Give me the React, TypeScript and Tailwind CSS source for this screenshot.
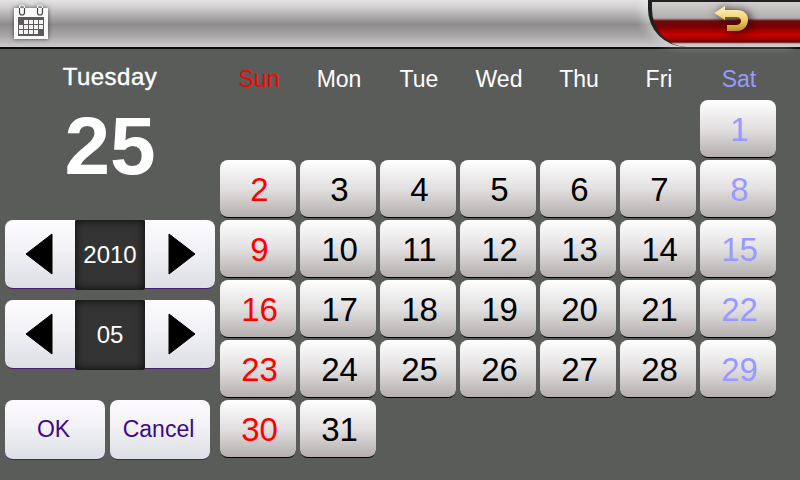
const font = "font-['Liberation_Sans',Arial,sans-serif]";

const weekDays = [
  { label: "Sun", color: "text-[#ff0000]" },
  { label: "Mon", color: "text-white" },
  { label: "Tue", color: "text-white" },
  { label: "Wed", color: "text-white" },
  { label: "Thu", color: "text-white" },
  { label: "Fri", color: "text-white" },
  { label: "Sat", color: "text-[#9999ff]" },
];

function CalendarIcon() {
  return (
    <svg width="36" height="36" viewBox="0 0 36 36" className="drop-shadow-[0_0_2px_rgba(0,0,0,0.6)]">
      <rect x="1" y="4" width="34" height="31" fill="#fafafa" />
      <rect x="5" y="13" width="26" height="19" fill="#5c5a5a" />
      {[0, 1, 2, 3, 4].map((c) =>
        [0, 1, 2].map((r) =>
          r === 0 && c < 1 ? null : r === 2 && c > 3 ? null : (
            <rect key={`${c}-${r}`} x={6 + c * 5} y={16 + r * 5} width="4" height="4" fill="#f4f4f4" />
          ),
        ),
      )}
      <path d="M6.5 4v4.5a2.5 2.5 0 0 0 5 0V4M24.5 4v4.5a2.5 2.5 0 0 0 5 0V4" fill="none" stroke="#444" strokeWidth="1.2" />
      <path d="M6.5 4V3a2.5 2 0 0 1 5 0v1M24.5 4V3a2.5 2 0 0 1 5 0v1" fill="none" stroke="#f2f2f2" strokeWidth="1.2" />
    </svg>
  );
}

function BackIcon() {
  return (
    <svg width="34" height="25" viewBox="0 0 34 25" className="drop-shadow-[2px_1px_5px_rgba(30,0,0,0.95)]">
      <defs>
        <linearGradient id="back" x1="0" y1="0" x2="0" y2="1">
          <stop offset="0" stopColor="#fff6d0" />
          <stop offset="0.55" stopColor="#f2ce5e" />
          <stop offset="1" stopColor="#bd9125" />
        </linearGradient>
      </defs>
      <path
        d="M0 7 L11 0 V4 H23 C30 4 34 8 34 13 C34 21 29 25 23 25 H13 V19 H22 C25 19 27 17 27 15 C27 12 25 11 22 11 H11 V14 Z"
        fill="url(#back)"
      />
    </svg>
  );
}

function Arrow({ dir }: { dir: "left" | "right" }) {
  return (
    <svg width="28" height="42" viewBox="0 0 28 42">
      <path
        d={dir === "left" ? "M27 1 V41 L1 21 Z" : "M1 1 V41 L27 21 Z"}
        fill="#000"
        stroke="#000"
        strokeLinejoin="round"
      />
    </svg>
  );
}

function Stepper({ value }: { value: string }) {
  return (
    <div className="flex h-[70px] w-[210px]">
      <div className="mb-px flex w-[70px] items-center justify-center rounded-l-[8px] border-b border-[#4b1e6e] bg-gradient-to-b from-[#fdfbfe] via-[#f0f0f4] to-[#dcdfe4] pr-[3px]">
        <Arrow dir="left" />
      </div>
      <div className="flex w-[70px] items-center justify-center rounded-[3px] bg-[#333433] text-[24px] text-white shadow-[inset_0_0_10px_#080808]">
        {value}
      </div>
      <div className="mb-px flex w-[70px] items-center justify-center rounded-r-[8px] border-b border-[#4b1e6e] bg-gradient-to-b from-[#fdfbfe] via-[#f0f0f4] to-[#dcdfe4] pl-[3px]">
        <Arrow dir="right" />
      </div>
    </div>
  );
}

function ActionButton({ label, className }: { label: string; className: string }) {
  return (
    <button className={`flex h-[60px] items-center justify-center rounded-[8px] border-b border-[#4b1e6e] bg-gradient-to-b from-[#fdfbfe] via-[#f0f0f4] to-[#dcdfe4] pr-[3px] text-[23px] text-[#3d0a85] ${className}`}>
      {label}
    </button>
  );
}

function Day({ n, color }: { n: number; color: string }) {
  return (
    <div className={`flex h-[58px] items-center justify-center rounded-[8px] border-b border-black bg-gradient-to-b from-white via-[#e2e0e0] to-[#b4afae] pt-[1px] pl-[3px] text-[33px] leading-none ${color}`}>
      {n}
    </div>
  );
}

export default function App() {
  const days = Array.from({ length: 31 }, (_, i) => i + 1);
  return (
    <div className={`flex h-[480px] w-[800px] flex-col overflow-hidden bg-[#5a5c5a] ${font}`}>
      <header className="flex h-[49px] shrink-0 items-start justify-between border-b-2 border-[#0c0c0c] bg-[linear-gradient(to_bottom,#e4e2e2_0%,#d0cece_16%,#8e8c8c_52%,#a6a5a5_75%,#cccaca_100%)]">
        <div className="pl-[13px] pt-[4px]">
          <CalendarIcon />
        </div>
        <div className="h-[47px] w-[152px] rounded-bl-[38px] border-l-[4px] border-t-[2px] border-[#202020] bg-[linear-gradient(to_bottom,#d2cfcf_0%,#b0aeae_36%,#6a0c0c_42%,#7a0000_55%,#c80000_72%,#a00000_82%,#700000_89%,#c6c4c4_93%,#d0cece_100%)] pt-[4px] shadow-[-7px_0_8px_rgba(255,255,255,0.35)]">
          <div className="flex justify-center pl-[10px]">
            <BackIcon />
          </div>
        </div>
      </header>

      <main className="flex flex-1 pl-[5px]">
        <section className="flex w-[215px] shrink-0 flex-col">
          <div className="mt-[14px] w-[210px] text-center text-[24px] leading-[28px] tracking-[0.5px] text-white [-webkit-text-stroke:0.4px_white]">
            Tuesday
          </div>
          <div className="mt-[10px] flex h-[90px] w-[210px] items-center justify-center text-[82px] leading-none font-bold text-white">
            25
          </div>
          <div className="mt-[29px] flex flex-col gap-[10px]">
            <Stepper value="2010" />
            <Stepper value="05" />
          </div>
          <div className="mt-[30px] flex gap-[5px]">
            <ActionButton label="OK" className="w-[100px]" />
            <ActionButton label="Cancel" className="w-[100px]" />
          </div>
        </section>

        <section className="grid w-[556px] grid-cols-7 content-start gap-x-[4px] gap-y-[2px] pt-[11px]">
          {weekDays.map((d) => (
            <div key={d.label} className={`h-[38px] pl-[2px] text-center text-[23px] leading-[38px] ${d.color}`}>
              {d.label}
            </div>
          ))}
          <div className="col-span-6" />
          {days.map((n) => {
            const col = n % 7;
            const color = col === 2 ? "text-[#ff0000]" : col === 1 ? "text-[#9999ff]" : "text-black";
            return <Day key={n} n={n} color={color} />;
          })}
        </section>
      </main>
    </div>
  );
}
